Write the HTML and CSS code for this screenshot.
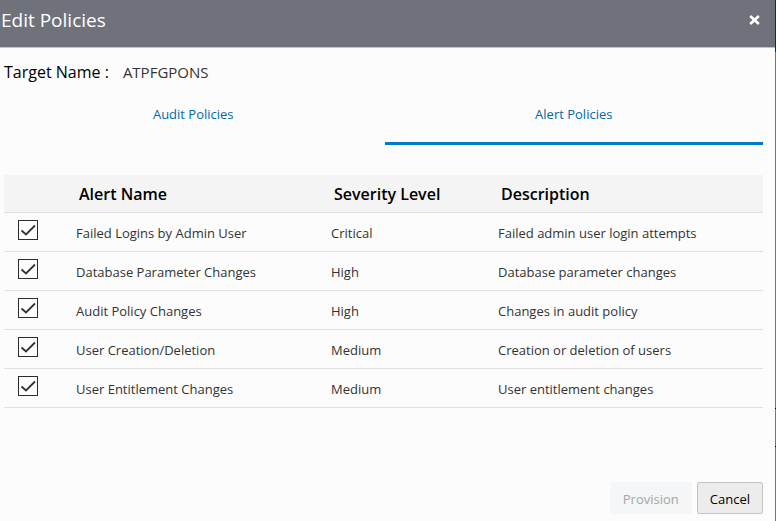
FILE: index.html
```html
<!DOCTYPE html>
<html lang="en">
<head>
<meta charset="utf-8">
<title>Edit Policies</title>
<link rel="stylesheet" href="styles.css">
</head>
<body>
<main class="dialog">
  <header class="dialog-header">
    <h1 class="title">Edit Policies</h1>
    <button class="close" type="button" aria-label="Close">
      <svg width="11" height="10" viewBox="0 0 11 10" aria-hidden="true"><path d="M1.2 1 9.8 9M9.8 1 1.2 9" stroke="currentColor" stroke-width="2.6" fill="none"/></svg>
    </button>
  </header>
  <section class="content">
    <p class="target"><span class="target-label">Target Name :</span><span class="target-value">ATPFGPONS</span></p>
    <nav class="tabs">
      <a class="tab" href="#audit">Audit Policies</a>
      <a class="tab active" href="#alert" aria-current="page">Alert Policies</a>
    </nav>
    <table class="policies">
      <colgroup><col class="col-check"><col class="col-name"><col class="col-level"><col></colgroup>
      <thead>
        <tr><td></td><th>Alert Name</th><th>Severity Level</th><th>Description</th></tr>
      </thead>
      <tbody>
        <tr><td class="check"><input type="checkbox" id="p1" checked></td><td><label for="p1">Failed Logins by Admin User</label></td><td>Critical</td><td>Failed admin user login attempts</td></tr>
        <tr><td class="check"><input type="checkbox" id="p2" checked></td><td><label for="p2">Database Parameter Changes</label></td><td>High</td><td>Database parameter changes</td></tr>
        <tr><td class="check"><input type="checkbox" id="p3" checked></td><td><label for="p3">Audit Policy Changes</label></td><td>High</td><td>Changes in audit policy</td></tr>
        <tr><td class="check"><input type="checkbox" id="p4" checked></td><td><label for="p4">User Creation/Deletion</label></td><td>Medium</td><td>Creation or deletion of users</td></tr>
        <tr><td class="check"><input type="checkbox" id="p5" checked></td><td><label for="p5">User Entitlement Changes</label></td><td>Medium</td><td>User entitlement changes</td></tr>
      </tbody>
    </table>
  </section>
  <footer class="actions">
    <button class="button" type="button" disabled>Provision</button>
    <button class="button" type="button">Cancel</button>
  </footer>
</main>
</body>
</html>
```
FILE: styles.css
```css
* {
  box-sizing: border-box;
}

body {
  margin: 0;
  padding-right: 1px;
  background: linear-gradient(#003352 52px, #767676 52px 408px, #000 408px 409px, #767676 409px 446px, #000 446px 447px, #767676 447px);
  font-family: "Open Sans", "Noto Sans", sans-serif;
  font-size: 13px;
  line-height: 20px;
  color: #333;
}

.dialog {
  display: flex;
  flex-direction: column;
  min-height: 100vh;
  background: #fcfcfc;
}

.dialog-header {
  display: flex;
  justify-content: space-between;
  align-items: flex-start;
  padding: 7px 12px 14px 1px;
  background: #70727b;
  border-bottom: 1px solid #c4c4c8;
  color: #fff;
}

.title {
  margin: 0;
  font-size: 19px;
  font-weight: 400;
  line-height: 26px;
}

.close {
  display: flex;
  align-items: center;
  justify-content: center;
  height: 26px;
  padding: 0 3px;
  border: 0;
  background: none;
  color: inherit;
}

.content {
  flex: 1;
  padding: 14px 12px 0 4px;
}

.target {
  display: flex;
  align-items: center;
  gap: 14px;
  margin: 0;
}

.target-label {
  font-size: 16px;
  color: #000;
}

.target-value {
  font-size: 15px;
}

.tabs {
  display: flex;
  gap: 2px;
}

.tab {
  flex: 1;
  padding: 22px 0 18px;
  border-bottom: 3px solid transparent;
  color: #0468a8;
  text-align: center;
  text-decoration: none;
}

.tab.active {
  border-bottom-color: #0079c8;
}

.policies {
  width: 100%;
  margin-top: 30px;
  border-collapse: separate;
  border-spacing: 0;
  table-layout: fixed;
}

.col-check {
  width: 62px;
}

.col-name {
  width: 255px;
}

.col-level {
  width: 167px;
}

.policies th,
.policies td {
  height: 39px;
  padding: 2px 10px 0;
  border-bottom: 1px solid #dfe0e1;
  text-align: left;
}

.policies thead th,
.policies thead td {
  height: 38px;
  padding: 0 13px;
  background: #f4f4f4;
}

.policies th {
  font-size: 16px;
  font-weight: 600;
  color: #000;
}

.policies .check {
  padding: 7px 14px 0;
  vertical-align: top;
}

.check input {
  display: block;
  width: 20px;
  height: 20px;
  margin: 0;
  appearance: none;
  border: 1px solid #2b2b2b;
}

.check input:checked {
  background: url("data:image/svg+xml,%3Csvg xmlns='http://www.w3.org/2000/svg' viewBox='0 0 18 18'%3E%3Cpath d='M2.5 9.5 7 13.5 16 4.5' fill='none' stroke='%23333' stroke-width='1.8'/%3E%3C/svg%3E") center / 18px 18px no-repeat;
}

.actions {
  display: flex;
  justify-content: flex-end;
  gap: 5px;
  padding: 0 12px 7px;
}

.button {
  height: 32px;
  padding: 2px 12px 0;
  border: 1px solid #c4c4c4;
  border-radius: 2px;
  background: #ececec;
  color: #000;
  font: inherit;
}

.button:disabled {
  border-color: #f4f6f8;
  background: #f4f6f8;
  color: #a5a5a5;
}
```
